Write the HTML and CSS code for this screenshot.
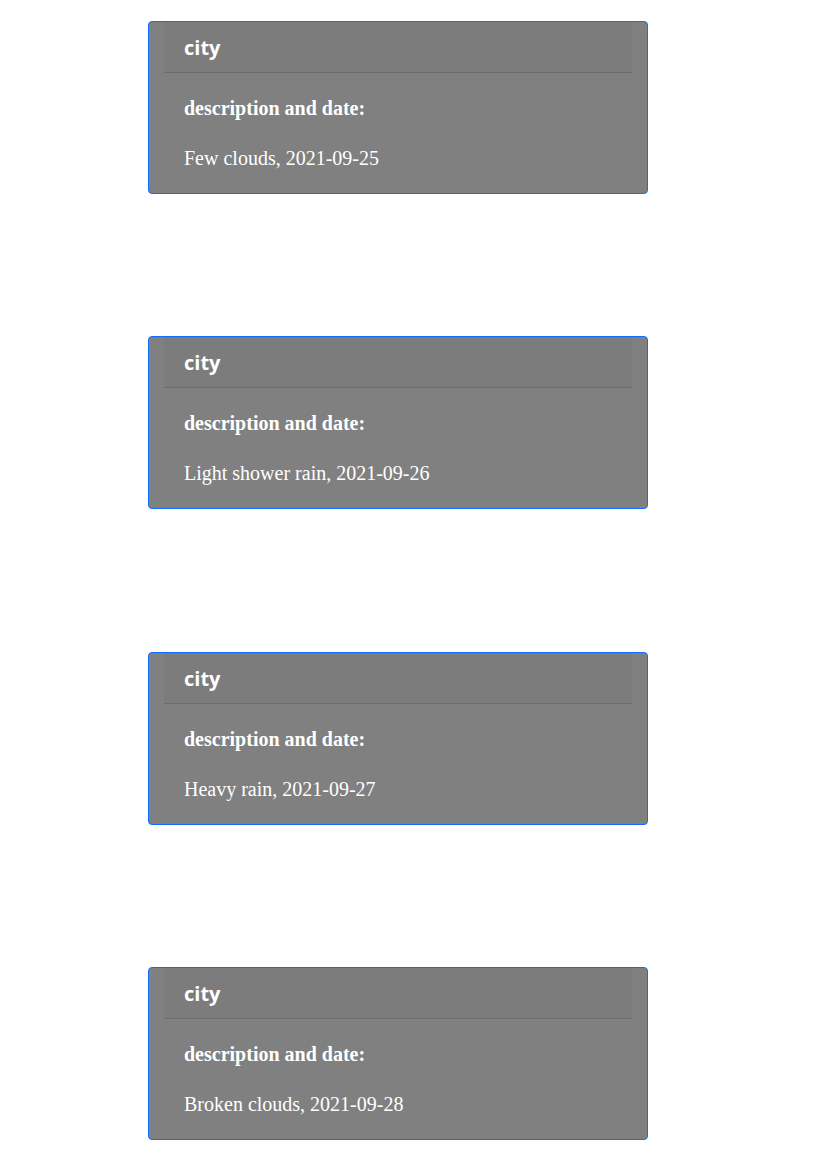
FILE: index.html
```html
<!DOCTYPE html>
<html>
<head>
<meta charset="utf-8">
<link rel="stylesheet" href="styles.css">
</head>
<body>
<div class="list">
  <div class="card">
    <div class="card-header">city</div>
    <div class="card-body">
      <p class="label">description and date:</p>
      <p class="value">Few clouds, 2021-09-25</p>
    </div>
  </div>
  <div class="card">
    <div class="card-header">city</div>
    <div class="card-body">
      <p class="label">description and date:</p>
      <p class="value">Light shower rain, 2021-09-26</p>
    </div>
  </div>
  <div class="card">
    <div class="card-header">city</div>
    <div class="card-body">
      <p class="label">description and date:</p>
      <p class="value">Heavy rain, 2021-09-27</p>
    </div>
  </div>
  <div class="card">
    <div class="card-header">city</div>
    <div class="card-body">
      <p class="label">description and date:</p>
      <p class="value">Broken clouds, 2021-09-28</p>
    </div>
  </div>
</div>
</body>
</html>
```
FILE: styles.css
```css
html, body {
  margin: 0;
  padding: 0;
  background: #ffffff;
}
.list {
  display: flex;
  flex-direction: column;
  gap: 142.33px;
  padding: 21px 0 0 148px;
}
.card {
  box-sizing: border-box;
  width: 500px;
  height: 173px;
  background: #808080;
  border: 1px solid #0d6efd;
  border-radius: 4px;
  color: #ffffff;
}
.card-header {
  box-sizing: border-box;
  margin: 0 15px;
  height: 51px;
  padding: 2px 20px 0;
  background: rgba(0, 0, 0, 0.03);
  border-bottom: 1px solid rgba(0, 0, 0, 0.125);
  font-family: "Open Sans", sans-serif;
  font-weight: 700;
  font-size: 20px;
  line-height: 48px;
}
.card-body {
  padding: 24px 20px 0 35px;
  font-family: "Liberation Serif", serif;
  font-size: 20px;
}
.label {
  margin: 0;
  font-weight: 700;
  line-height: 23px;
}
.value {
  margin: 27px 0 0;
  line-height: 23px;
}
```
